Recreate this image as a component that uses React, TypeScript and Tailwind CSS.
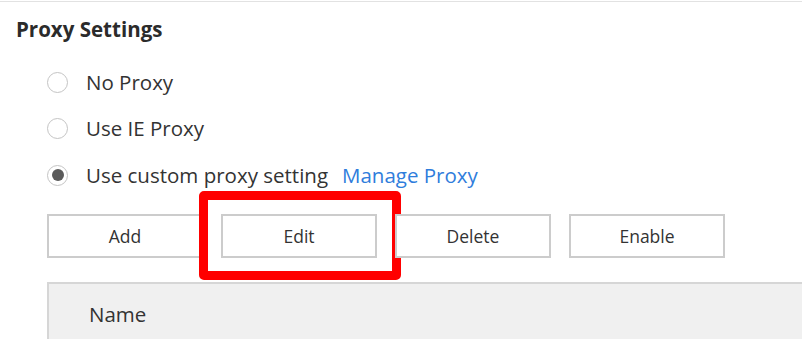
import { useState } from 'react'

const options = ['No Proxy', 'Use IE Proxy', 'Use custom proxy setting']
const actions = ['Add', 'Edit', 'Delete', 'Enable']

function Radio({ checked }: { checked: boolean }) {
  return (
    <span className="flex items-center justify-center w-[21px] h-[21px] rounded-full border-[1.5px] border-[#c4c4c4] bg-white shrink-0">
      {checked && <span className="w-[12px] h-[12px] rounded-full bg-[#5a5a5a]" />}
    </span>
  )
}

export default function App() {
  const [selected, setSelected] = useState(2)

  return (
    <div className="w-[802px] h-[339px] overflow-hidden bg-white text-[#333] font-['Open_Sans','Noto_Sans',sans-serif]">
      <div className="h-[2px] bg-white border-b border-[#e2e2e2]" />

      <div className="pl-4 pt-[12px]">
        <h2 className="text-[20.5px] font-bold leading-[30px] text-[#2b2b2b]">Proxy Settings</h2>
      </div>

      {/* Radio options */}
      <div className="flex flex-col pl-[47px] mt-[23px] gap-[16.5px]">
        {options.map((o, i) => (
          <label key={o} className="flex items-center h-[30px] cursor-pointer" onClick={() => setSelected(i)}>
            <Radio checked={selected === i} />
            <span className="ml-[18px] text-[20.5px]">{o}</span>
            {i === 2 && <span className="ml-[14px] text-[20.5px] text-[#2f7ddc]">Manage Proxy</span>}
          </label>
        ))}
      </div>

      {/* Action buttons */}
      <div className="flex gap-[18px] pl-[47px] mt-[24px]">
        {actions.map(a => (
          <div key={a} className="relative">
            <button className="w-[156px] h-[44px] border-2 border-[#cccccc] bg-white text-[17.5px] text-[#333]">
              {a}
            </button>
            {a === 'Edit' && (
              <div className="absolute -left-[22px] -top-[23px] w-[202px] h-[89px] border-[9px] border-[#ff0000] rounded-[5px] pointer-events-none" />
            )}
          </div>
        ))}
      </div>

      {/* Table header */}
      <div className="ml-[47px] mt-[24px] h-[80px] bg-[#f0f0f0] border-t-2 border-l-2 border-[#d6d6d6] flex items-start">
        <span className="ml-[40px] mt-[15px] text-[20.5px]">Name</span>
      </div>
    </div>
  )
}
